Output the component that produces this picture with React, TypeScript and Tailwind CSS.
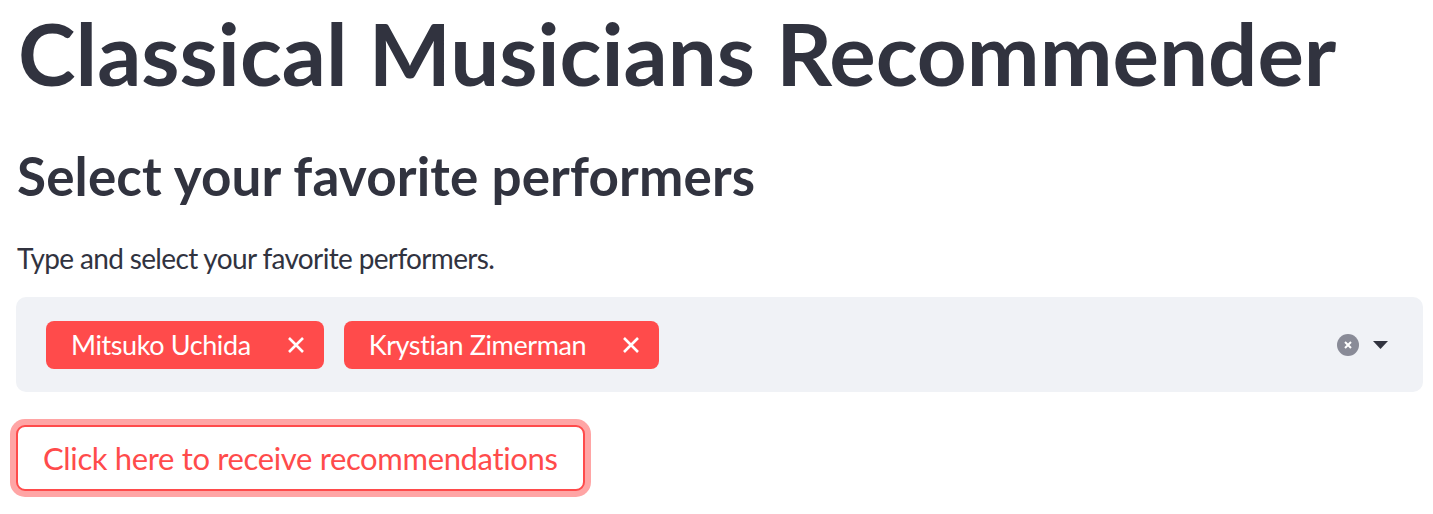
const performers = ["Mitsuko Uchida", "Krystian Zimerman"]

function CloseIcon() {
  return (
    <svg width="18" height="18" viewBox="0 0 18 18" fill="none" stroke="white" strokeWidth="2.6">
      <path d="M2 2 L16 16 M16 2 L2 16" />
    </svg>
  )
}

export default function App() {
  return (
    <div className="min-h-screen bg-white px-4 font-['Lato',sans-serif] text-[#31333f] [font-variant-ligatures:none]">
      {/* Título */}
      <h1 className="pt-[9px] pl-[2px] text-[87px] font-bold leading-none">Classical Musicians Recommender</h1>

      <h3 className="mt-[53px] pl-[1px] text-[53px] font-bold leading-none tracking-[0.15px]">
        Select your favorite performers
      </h3>

      <p className="mt-[42px] pl-[1px] text-[28px] leading-none tracking-[-0.65px]">
        Type and select your favorite performers.
      </p>

      {/* Multiselect */}
      <div className="mt-[25px] flex h-[95px] w-[1407px] items-center rounded-[10px] bg-[#f0f2f6] pl-[30px] pr-[35px]">
        <div className="flex flex-1 items-center gap-[20px]">
          {performers.map((name) => (
            <div
              key={name}
              className="flex h-[48px] items-center gap-[36px] rounded-[8px] bg-[#ff4b4b] pl-[25px] pr-[19px] text-[27px] leading-none tracking-[-0.4px] text-white"
            >
              <span>{name}</span>
              <CloseIcon />
            </div>
          ))}
        </div>
        <div className="flex items-center gap-[14px]">
          <div className="flex h-[22px] w-[22px] items-center justify-center rounded-full bg-[#898b97]">
            <svg width="10" height="10" viewBox="0 0 10 10" stroke="white" strokeWidth="2">
              <path d="M2 2 L8 8 M8 2 L2 8" />
            </svg>
          </div>
          <svg width="15" height="8" viewBox="0 0 15 8" fill="#31333f">
            <path d="M0 0 H15 L7.5 8 Z" />
          </svg>
        </div>
      </div>

      {/* Botón */}
      <button className="mt-[33px] flex h-[66px] w-[569px] items-center whitespace-nowrap rounded-[9px] border-2 border-[#ff4b4b] bg-white pl-[25px] text-left text-[31px] leading-none tracking-[-0.35px] text-[#ff4b4b] shadow-[0_0_0_6px_#ffa5a5]">
        Click here to receive recommendations
      </button>
    </div>
  )
}
